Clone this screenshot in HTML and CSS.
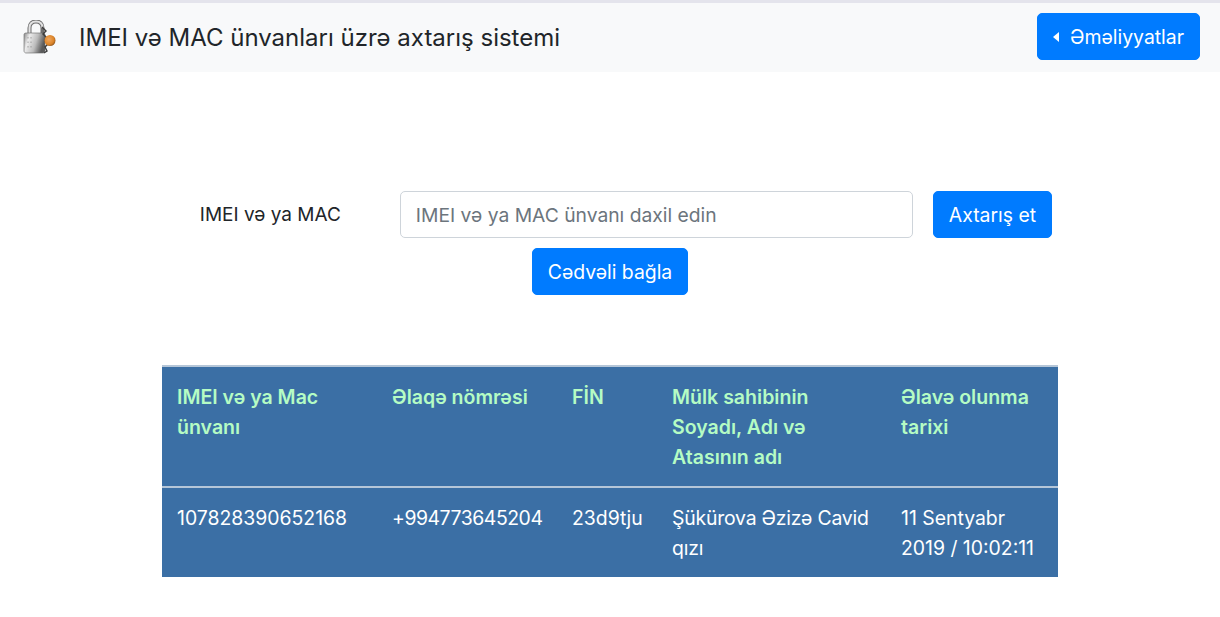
FILE: index.html
```html
<!DOCTYPE html>
<html lang="az">
<head>
<meta charset="utf-8">
<title>IMEI və MAC</title>
<link rel="stylesheet" href="styles.css">
</head>
<body>
<header class="nav">
  <div class="brand">
    <svg class="logo" width="34" height="36" viewBox="0 0 34 36" aria-hidden="true">
      <defs>
        <linearGradient id="lockbody" x1="0" y1="0" x2="1" y2="0.300">
          <stop offset="0" stop-color="#8a8a8a"/><stop offset=".28" stop-color="#ececec"/><stop offset=".65" stop-color="#bcbcbc"/><stop offset="1" stop-color="#5a5a5a"/>
        </linearGradient>
        <radialGradient id="lockorb" cx=".4" cy=".4" r=".7">
          <stop offset="0" stop-color="#f0a860"/><stop offset=".65" stop-color="#dc8428"/><stop offset="1" stop-color="#7a4a1c"/>
        </radialGradient>
      </defs>
      <path d="M7.500 15V8C7.500 3.800 10.200 1.500 14 1.500S20.500 3.800 20.500 8v7" fill="none" stroke="#6e6e6e" stroke-width="4"/>
      <path d="M7.500 15V8C7.500 3.800 10.200 1.500 14 1.500S20.500 3.800 20.500 8" fill="none" stroke="#e2e2e2" stroke-width="2"/>
      <path d="M2 14.500C2 13.500 3 13 4 13h17c1 0 2 1 2 2v16c0 1-1 2-2 2H4c-1 0-2-1-2-2z" fill="url(#lockbody)" stroke="#666" stroke-width=".6"/>
      <path d="M6 17v13M9 17v13" stroke="#8f8f8f" stroke-width=".8" stroke-dasharray="1.500 3"/>
      <path d="M20 7l4 4-3 3 3 3-1 4 3 3-3 3 2 4-3 2" fill="none" stroke="#3c3c3c" stroke-width="1.400"/>
      <circle cx="28" cy="20.500" r="5.500" fill="url(#lockorb)"/>
    </svg>
    <h1 class="title">IMEI və MAC ünvanları üzrə axtarış sistemi</h1>
  </div>
  <button class="btn btn-ops"><span class="caret"></span>Əməliyyatlar</button>
</header>
<main class="main">
  <form class="search">
    <label class="search-label" for="q">IMEI və ya MAC</label>
    <input class="search-input" id="q" type="text" placeholder="IMEI və ya MAC ünvanı daxil edin">
    <button class="btn" type="button">Axtarış et</button>
  </form>
  <div class="close-row"><button class="btn" type="button">Cədvəli bağla</button></div>
  <table class="results">
    <thead>
      <tr>
        <th class="c1">IMEI və ya Mac ünvanı</th>
        <th class="c2">Əlaqə nömrəsi</th>
        <th class="c3">FİN</th>
        <th class="c4">Mülk sahibinin Soyadı, Adı və Atasının adı</th>
        <th class="c5">Əlavə olunma tarixi</th>
      </tr>
    </thead>
    <tbody>
      <tr>
        <td>107828390652168</td>
        <td class="phone">+994773645204</td>
        <td>23d9tju</td>
        <td class="owner">Şükürova Əzizə Cavid qızı</td>
        <td>11 Sentyabr 2019 / 10:02:11</td>
      </tr>
    </tbody>
  </table>
</main>
</body>
</html>
```
FILE: styles.css
```css
* { box-sizing: border-box; }
html, body { margin: 0; padding: 0; }
body {
  font-family: "Inter", "Noto Sans", sans-serif;
  font-size: 19.4px;
  line-height: 30px;
  color: #212529;
  background: #fff;
  overflow: hidden;
  height: 617px;
}
.nav {
  display: flex;
  justify-content: space-between;
  align-items: center;
  height: 72px;
  padding: 0 20px 0 22px;
  background: #f8f9fa;
  border-top: 3px solid #e4e4ec;
}
.brand { display: flex; align-items: center; gap: 23px; }
.logo { display: block; }
.title { margin: 0; font-size: 24px; font-weight: 400; line-height: 36px; color: #212529; }
.btn {
  font: inherit;
  color: #fff;
  background: #007bff;
  border: 1px solid #007bff;
  border-radius: 5px;
  padding: 8px 15px;
  height: 47px;
  cursor: pointer;
}
.btn-ops { display: flex; align-items: center; margin-bottom: 2px; }
.caret {
  width: 0; height: 0;
  margin-right: 11px;
  border-top: 5px solid transparent;
  border-bottom: 5px solid transparent;
  border-right: 6px solid #fff;
}
.main { display: flex; flex-direction: column; align-items: center; padding-top: 119px; }
.search { display: flex; align-items: center; margin-left: 32px; }
.search-label { width: 200px; font-size: 19px; }
.search-input {
  font: inherit;
  font-size: 19.27px;
  width: 513px;
  height: 47px;
  padding: 8px 15px;
  color: #495057;
  background: #fff;
  border: 1px solid #ced4da;
  border-radius: 5px;
  margin-right: 20px;
}
.search-input::placeholder { color: #6c757d; opacity: 1; }
.close-row { margin-top: 10px; }
.results {
  width: 896px;
  margin-top: 70px;
  border-collapse: collapse;
  table-layout: fixed;
  background: #3b6fa5;
  color: #fff;
}
.results th, .results td {
  padding: 15px 15px 14px;
  text-align: left;
  vertical-align: top;
  border-top: 2px solid #b5c6d8;
}
.results th { color: #b5fcc4; font-weight: 600; font-size: 19.55px; }
.phone { letter-spacing: -0.45px; }
.owner { letter-spacing: -0.2px; }
.c1 { width: 215px; }
.c2 { width: 180px; }
.c3 { width: 100px; }
.c4 { width: 229px; }
.c5 { width: 172px; }
```
